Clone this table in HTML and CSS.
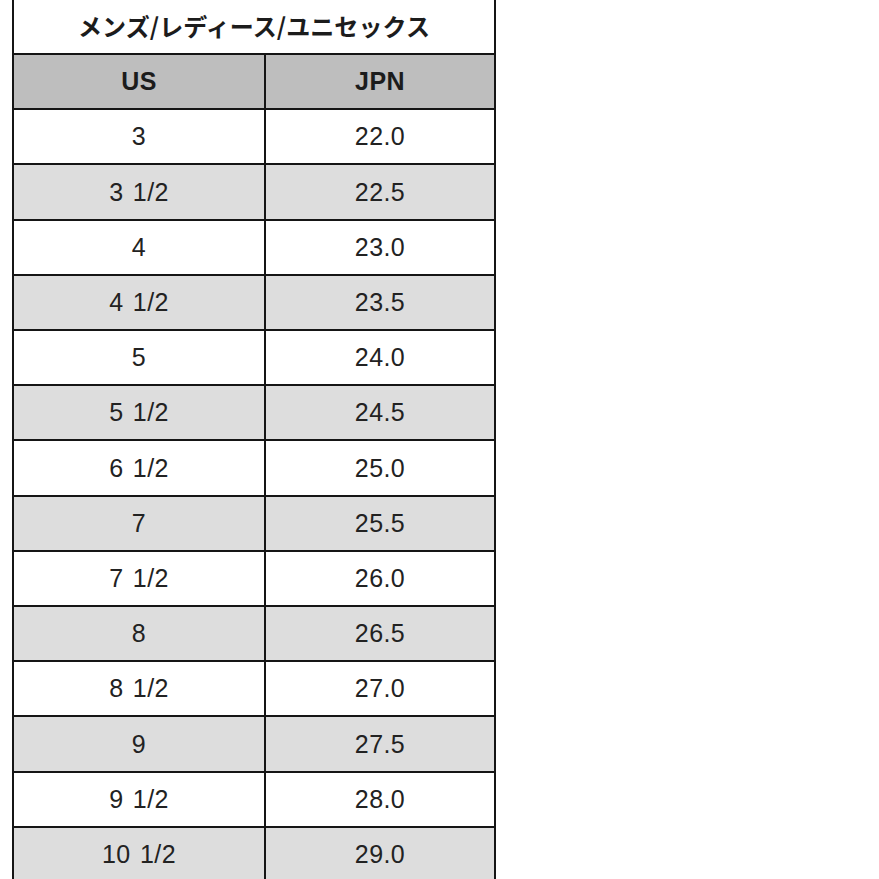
FILE: index.html
```html
<!DOCTYPE html>
<html lang="ja">
<head>
<meta charset="utf-8">
<title>サイズ表</title>
<link rel="stylesheet" href="styles.css">
</head>
<body>
<div class="chart">
  <div class="title">メンズ/レディース/ユニセックス</div>
  <div class="row head"><div class="cell">US</div><div class="cell">JPN</div></div>
  <div class="row"><div class="cell">3</div><div class="cell">22.0</div></div>
  <div class="row alt"><div class="cell">3 1/2</div><div class="cell">22.5</div></div>
  <div class="row"><div class="cell">4</div><div class="cell">23.0</div></div>
  <div class="row alt"><div class="cell">4 1/2</div><div class="cell">23.5</div></div>
  <div class="row"><div class="cell">5</div><div class="cell">24.0</div></div>
  <div class="row alt"><div class="cell">5 1/2</div><div class="cell">24.5</div></div>
  <div class="row"><div class="cell">6 1/2</div><div class="cell">25.0</div></div>
  <div class="row alt"><div class="cell">7</div><div class="cell">25.5</div></div>
  <div class="row"><div class="cell">7 1/2</div><div class="cell">26.0</div></div>
  <div class="row alt"><div class="cell">8</div><div class="cell">26.5</div></div>
  <div class="row"><div class="cell">8 1/2</div><div class="cell">27.0</div></div>
  <div class="row alt"><div class="cell">9</div><div class="cell">27.5</div></div>
  <div class="row"><div class="cell">9 1/2</div><div class="cell">28.0</div></div>
  <div class="row alt"><div class="cell">10 1/2</div><div class="cell">29.0</div></div>
</div>
</body>
</html>
```
FILE: styles.css
```css
html, body {
  margin: 0;
  padding: 0;
  background: #ffffff;
}
body {
  height: 879px;
  overflow: hidden;
  font-family: "Liberation Sans", "Noto Sans CJK JP", sans-serif;
  color: #222222;
}
.chart {
  margin: -2px 0 0 12px;
  width: 484px;
  box-sizing: border-box;
  border: 2px solid #151515;
  border-bottom: none;
}
.title {
  height: 55px;
  box-sizing: border-box;
  padding-bottom: 3px;
  border-bottom: 2px solid #151515;
  display: flex;
  align-items: center;
  justify-content: center;
  font-family: "Noto Sans CJK JP", sans-serif;
  font-weight: 700;
  font-size: 24px;
  color: #1c1c1c;
  letter-spacing: 0.1px;
}
.row {
  display: grid;
  grid-template-columns: 252px 1fr;
  height: 55.21px;
  box-sizing: border-box;
  border-bottom: 2px solid #151515;
}
.cell {
  display: flex;
  align-items: center;
  justify-content: center;
  font-size: 25px;
  letter-spacing: 0.4px;
  word-spacing: 2px;
}
.cell:first-child {
  border-right: 2px solid #151515;
}
.head {
  background: #bebebe;
}
.head .cell {
  font-weight: 700;
  color: #1c1c1c;
}
.alt {
  background: #dddddd;
}
```
